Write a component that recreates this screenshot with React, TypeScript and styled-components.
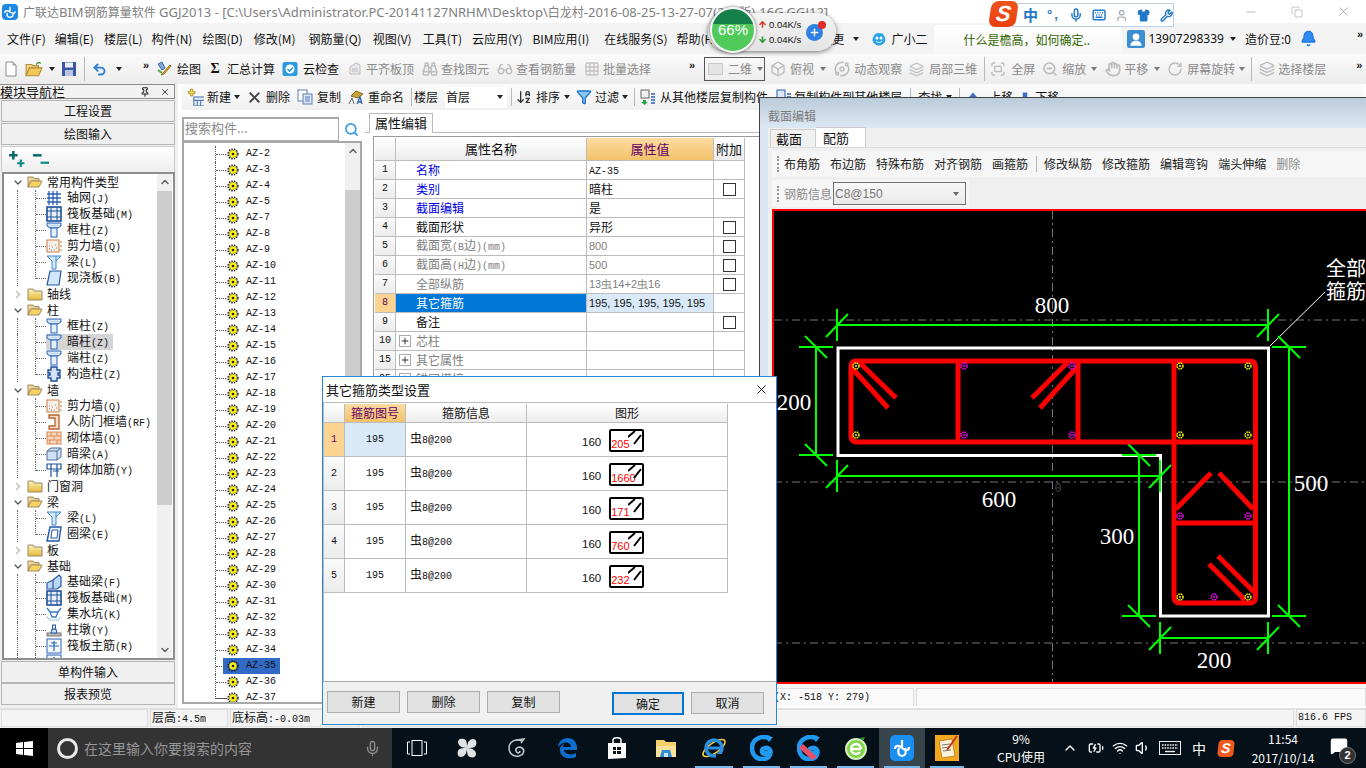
import React from 'react';
import styled, { createGlobalStyle } from 'styled-components';
import {
  Binoculars, Glasses, Grid3x3, Box, Orbit, Layers, Hand, RotateCw, Fullscreen, Search, ZoomOut,
  Undo2, Mic, Keyboard, Shirt, Wrench, User, ChevronUp, ChevronDown, ChevronRight, Wifi, Volume1,
  Pin, X, Minus, Copy, ArrowUp, ArrowDown, Plus, Bell, BatteryCharging, MessageSquare, Filter, ArrowDownAZ,
} from 'lucide-react';

const CJK = '"Noto Sans CJK SC", "Noto Sans", sans-serif';

const Global = createGlobalStyle`
  html, body { margin: 0; padding: 0; width: 1366px; height: 768px; overflow: hidden; background: #0b1115; }
  * { box-sizing: border-box; }
  #root { width: 1366px; height: 768px; }
`;

const Screen = styled.div`
  position: relative; width: 1366px; height: 768px; overflow: hidden; display: flex; flex-direction: column;
  background: #f0f0f0; color: #111; font: 12px/16px ${CJK};
`;

const TitleBar = styled.div`
  height: 23px; background: #fff; display: flex; align-items: center; padding-left: 2px; flex: none; color: #808080; font-size: 13px; white-space: nowrap;
`;
const AppBadge = styled.div`
  width: 16px; height: 16px; border-radius: 4px; background: #1e88e5; color: #fff; display: flex; align-items: center; justify-content: center; margin-right: 5px; flex: none;
`;
const TitleText = styled.span`font: 13px/16px "Noto Sans", "Noto Sans CJK SC", sans-serif;`;
const TitleCjk = styled.span`font: 12px/16px "Noto Sans CJK SC", sans-serif;`;
const WinControls = styled.div`
  margin-left: auto; display: flex; color: #8a8a8a;
`;
const WinBtn = styled.div`width: 46px; height: 23px; display: flex; align-items: center; justify-content: center;`;

const MenuBar = styled.div`
  height: 31px; flex: none; background: #f3f3f3; display: flex; align-items: center; white-space: nowrap;
`;
const MenuItem = styled.span<{ $ml?: number; $c?: string }>`
  margin-left: ${p => p.$ml ?? 10}px; color: ${p => p.$c ?? '#111'}; display: inline-flex; align-items: center;
`;
const PhoneNo = styled(MenuItem)`font-family: "Noto Sans", sans-serif;`;
const TipTab = styled.div`
  width: 188px; height: 29px; margin-left: 7px; margin-top: 2px; background: linear-gradient(#fff, #f6f6f6); color: #336600; display: flex; align-items: center; justify-content: flex-start; padding-left: 29px; flex: none; border-radius: 3px 3px 0 0;
`;
const Caret = styled.i<{ $ml?: number; $c?: string }>`
  display: inline-block; width: 0; height: 0; border: 3px solid transparent; border-top: 4px solid ${p => p.$c ?? '#222'}; border-bottom: 0; margin-left: ${p => p.$ml ?? 5}px; flex: none;
`;
const More = styled.span<{ $ml?: number }>`
  font: bold 11px/10px "Liberation Sans", sans-serif; align-self: flex-start; margin-top: 6px; margin-left: ${p => p.$ml ?? 0}px; letter-spacing: -1px; width: 10px; flex: none;
`;

const ToolRow = styled.div`
  height: 30px; flex: none; display: flex; align-items: center; white-space: nowrap; background: linear-gradient(#fbfbfb, #ececec);
`;
const Tool = styled.span<{ $ml?: number; $gap?: number; $dim?: boolean }>`
  display: inline-flex; align-items: center; flex: none; margin-left: ${p => p.$ml ?? 8}px; gap: ${p => p.$gap ?? 4}px; color: ${p => (p.$dim ? '#8a8a8a' : '#111')};
`;
const Sep = styled.i<{ $ml?: number; $h?: number }>`
  display: inline-block; width: 1px; height: ${p => p.$h ?? 24}px; background: #b8b8b8; margin-left: ${p => p.$ml ?? 7}px; flex: none;
`;
const Sigma = styled.b`font: bold 14px/16px "Liberation Serif", serif; width: 10px; text-align: center;`;
const ViewCombo = styled.div`
  width: 61px; height: 24px; margin-left: 5px; border: 1px solid #555; display: flex; align-items: center; padding-left: 3px; color: #8a8a8a; flex: none; gap: 5px;
`;
const ViewSwatch = styled.i`width: 15px; height: 12px; background: #e4e4e4; border: 1px solid #c8c8c8; display: block;`;

const Workspace = styled.div`flex: 1; min-height: 0; display: flex; background: #fff;`;

const Nav = styled.div`width: 178px; flex: none; display: flex; flex-direction: column; background: #f0f0f0; padding-right: 2px;`;
const NavHead = styled.div`
  height: 15px; flex: none; border: 1px solid #8c8c8c; border-left: 0; background: #f2f2f2; display: flex; align-items: center; font-size: 13px; line-height: 13px; margin-right: 1px; color: #111;
`;
const NavHeadIcons = styled.span`margin-left: auto; display: flex; gap: 10px; padding-right: 4px; color: #222;`;
const NavBtn = styled.div<{ $mt?: number }>`
  height: 22px; flex: none; margin: ${p => p.$mt ?? 1}px 1px 0 1px; background: #f0f0f0; border: 1px solid #b5b5b5; display: flex; align-items: center; justify-content: center; font-size: 12px; color: #111;
`;
const ExpandBar = styled.div`
  height: 26px; flex: none; margin: 1px 1px 0 1px; background: linear-gradient(#fff, #eee); border: 1px solid #ccc; border-bottom: 0; display: flex; align-items: center; padding: 0 0 3px 6px; gap: 7px;
`;
const NavTree = styled.div`
  height: 488px; flex: none; margin-left: 2px; margin-right: 1px; border: 2px solid #8f8f8f; background: #fff; display: flex; overflow: hidden; padding-right: 1px;
`;
const NavRows = styled.div`flex: 1; min-width: 0; overflow: hidden;`;
const NavRow = styled.div<{ $leaf?: boolean; $trunk?: boolean; $last?: boolean }>`
  position: relative; height: 16px; display: flex; align-items: center; white-space: nowrap; padding-left: ${p => (p.$leaf ? 42 : 8)}px;
  &::before { content: ''; position: absolute; left: 13px; top: 0; bottom: 0; border-left: ${p => (p.$trunk ? '1px dotted #666' : '0')}; }
  &::after { content: ''; position: absolute; left: 31px; top: 0; height: ${p => (p.$last ? '8px' : '16px')}; width: 10px; border-left: ${p => (p.$leaf ? '1px dotted #666' : '0')}; border-bottom: ${p => (p.$last ? '1px dotted #666' : '0')}; }
`;
const LeafTick = styled.i`position: absolute; left: 32px; top: 8px; width: 10px; border-top: 1px dotted #666;`;
const NavLabel = styled.span<{ $sel?: boolean }>`
  display: inline-flex; align-items: center; gap: 5px; height: 16px; padding-right: ${p => (p.$sel ? '4px' : '0')}; background: ${p => (p.$sel ? '#d5d5d5' : 'transparent')}; position: relative; z-index: 1;
`;
const FolderLabel = styled.span`display: inline-flex; align-items: center; gap: 4px; margin-left: 3px;`;
const Chevron = styled.span`width: 12px; display: inline-flex; justify-content: center; color: #777; flex: none; position: relative; z-index: 1; background: #fff;`;
const Lat = styled.span`font: 10px/16px "Liberation Mono", monospace;`;

const Scroll = styled.div`
  width: 15px; flex: none; background: #f0f0f0; display: flex; flex-direction: column; color: #606060; overflow: hidden;
`;
const ScrollArrow = styled.div`height: 16px; flex: none; display: flex; align-items: center; justify-content: center; background: #f0f0f0;`;
const ScrollThumb = styled.div<{ $top: number; $h: number }>`
  height: ${p => p.$h}px; margin-top: ${p => p.$top}px; flex: none; background: #cdcdcd;
`;
const ScrollFill = styled.div`flex: 1;`;

const CenterCol = styled.div`flex: 1; min-width: 0; display: flex; flex-direction: column; background: #fff;`;
const CenterBar = styled.div`
  height: 26px; flex: none; margin-left: 4px; margin-right: 2px; display: flex; align-items: center; white-space: nowrap; background: linear-gradient(#fcfcfc, #f0f0f0); border-radius: 3px 3px 0 0; overflow: hidden; color: #111;
`;
const FloorBox = styled.div`
  width: 62px; height: 21px; margin-left: 7px; background: #fff; display: flex; align-items: center; justify-content: space-between; padding: 0 4px 0 1px; flex: none;
`;
const CenterBody = styled.div`flex: 1; min-height: 0; display: flex;`;

const ListPane = styled.div`width: 184px; flex: none; padding: 7px 0 4px 4px; display: flex; flex-direction: column;`;
const SearchRow = styled.div`height: 24px; flex: none; display: flex; align-items: center;`;
const SearchBox = styled.div`
  width: 157px; height: 25px; border: 2px solid #a8a8a8; border-right-width: 1px; background: #fff; color: #8a8a8a; display: flex; align-items: center; padding: 0 0 2px 1px; font-size: 13px;
`;
const SearchGlyph = styled.span`margin-left: 5px; color: #3b9ae8; display: flex;`;
const ListBox = styled.div`flex: 1; min-height: 0; border: 2px solid #a8a8a8; display: flex; overflow: hidden;`;
const ListRows = styled.div`flex: 1; padding-top: 3px; overflow: hidden;`;
const ListRow = styled.div<{ $last?: boolean }>`
  position: relative; height: 16px; display: flex; align-items: center; padding-left: 43px;
  &::before { content: ''; position: absolute; left: 31px; top: 0; width: 11px; height: ${p => (p.$last ? '8px' : '16px')}; border-left: 1px dotted #555; border-bottom: ${p => (p.$last ? '1px dotted #555' : '0')}; }
`;
const RowTick = styled.i`position: absolute; left: 32px; top: 8px; width: 10px; border-top: 1px dotted #555;`;
const ListItem = styled.span<{ $sel?: boolean }>`
  display: inline-flex; align-items: center; gap: 7px; height: 16px; width: 57px; margin-left: -4px; padding-left: 4px; background: ${p => (p.$sel ? '#3169c6' : 'transparent')}; color: #111;
`;

const PropsPane = styled.div`flex: 1; min-width: 0; padding: 3px 0 0 3px; display: flex; flex-direction: column;`;
const TabStrip = styled.div`height: 20px; flex: none; border-bottom: 1px solid #bbb; display: flex; padding-left: 4px; font-size: 13px;`;
const PTab = styled.div`width: 64px; height: 20px; background: #fff; border: 1px solid #bbb; border-bottom: 0; display: flex; align-items: center; justify-content: center; padding-bottom: 2px;`;
const PropFrame = styled.div`margin: 3px 0 0 8px; border-top: 1px solid #999; border-left: 1px solid #999; padding-top: 1px; padding-left: 1px; flex: 1; min-height: 0; overflow: hidden;`;
const PropGrid = styled.div`display: grid; grid-template-columns: 21px 191px 127px 31px; grid-template-rows: 23px; grid-auto-rows: 19px;`;
const Cell = styled.div<{ $kind?: string; $c?: string; $center?: boolean; $pl?: number }>`
  border-right: 1px solid #bcbcbc; border-bottom: 1px solid #bcbcbc; display: flex; align-items: center; white-space: nowrap; overflow: hidden;
  padding-left: ${p => p.$pl ?? 0}px; justify-content: ${p => (p.$center ? 'center' : 'flex-start')};
  color: ${p => p.$c ?? '#111'};
  background: ${p => ({ head: 'linear-gradient(#fff,#ececec)', row: 'linear-gradient(#fafafa,#ececec)', gold: 'linear-gradient(#fcdba0,#f2c26a)', rowsel: '#fcd391', blue: '#0078d7', pale: '#d9e9f7' } as Record<string, string>)[p.$kind ?? ''] ?? '#fff'};
`;
const HeadCell = styled(Cell)`font-size: 13px;`;
const Check1 = styled.i`display: block; width: 13px; height: 13px; border: 1px solid #333; background: #fff;`;
const PlusBox = styled.span`width: 12px; height: 12px; border: 1px solid #aaa; display: inline-flex; align-items: center; justify-content: center; margin: 0 5px 0 3px; color: #111;`;
const Val = styled.span`font: 11px/16px "Liberation Sans", sans-serif;`;

const StatusBar = styled.div`height: 20px; flex: none; display: flex; background: #f0f0f0; padding-bottom: 1px; padding-left: 1px; gap: 2px; border-top: 1px solid #e0e0e0;`;
const StatusCell = styled.div<{ $w?: number; $grow?: boolean }>`
  width: ${p => (p.$w ? `${p.$w}px` : 'auto')}; flex: ${p => (p.$grow ? 1 : 'none')}; background: #f4f4f4; border: 1px solid #ddd; display: flex; align-items: center; padding-left: 1px; white-space: nowrap; font-size: 12px;
`;

const Taskbar = styled.div`height: 40px; flex: none; background: #061018; display: flex; align-items: center; color: #fff;`;
const Start = styled.div`width: 48px; height: 40px; background: #000; display: flex; align-items: center; justify-content: center; flex: none;`;
const TaskSearch = styled.div`
  width: 344px; height: 40px; background: #333; display: flex; align-items: center; color: #969696; font-size: 14px; padding-left: 9px; flex: none;
`;
const Cortana = styled.i`width: 21px; height: 21px; border: 3px solid #e8e8e8; border-radius: 50%; margin-right: 6px; flex: none;`;
const TaskMic = styled.span`margin-left: auto; margin-right: 11px; color: #8a8a8a; display: flex;`;
const TaskApp = styled.div<{ $w: number; $on?: boolean; $open?: boolean }>`
  position: relative; width: ${p => p.$w}px; height: 40px; flex: none; display: flex; align-items: center; justify-content: center; background: ${p => (p.$on ? '#38444b' : 'transparent')};
  &::after { content: ''; display: ${p => (p.$open ? 'block' : 'none')}; position: absolute; left: 5px; right: 5px; bottom: 0; height: 2px; background: #76b9ed; }
`;
const CpuBlock = styled.div`width: 72px; margin-left: 16px; text-align: center; font-size: 12px; line-height: 18px; flex: none;`;
const Tray = styled.div<{ $w: number }>`width: ${p => p.$w}px; height: 40px; display: flex; align-items: center; justify-content: center; flex: none; font-size: 14px;`;
const Clock = styled.div`width: 74px; text-align: center; font-size: 12px; line-height: 19px; flex: none; margin-left: 6px;`;
const Notice = styled.div`position: relative; width: 20px; height: 22px; display: flex; margin-left: 10px; color: #fff;`;
const NoticeBadge = styled.span`position: absolute; right: -6px; bottom: -5px; width: 17px; height: 17px; border-radius: 50%; background: #333; border: 1px solid #777; font: bold 11px/15px "Liberation Sans", sans-serif; text-align: center;`;

const NetPill = styled.div`
  position: absolute; left: 708px; top: 13px; width: 128px; height: 38px; border-radius: 19px; background: linear-gradient(#f4f4f4, #e4e4e4); box-shadow: 0 1px 5px rgba(0,0,0,.55); display: flex; align-items: center; padding-left: 50px; z-index: 8;
`;
const NetGauge = styled.div`
  position: absolute; left: 710px; top: 7px; width: 46px; height: 46px; border-radius: 50%; background: linear-gradient(#17804a 0 36%, #4fca5b 37% 100%); border: 2px solid #f5f5f5; box-shadow: 0 0 3px rgba(0,0,0,.7); color: #fff; font: 15px/42px "Liberation Sans", sans-serif; text-align: center; z-index: 9;
`;
const NetRates = styled.div`font: 9.5px/15px "Liberation Sans", sans-serif; color: #111; display: grid; grid-template-columns: 11px auto; align-items: center;`;
const NetPlus = styled.div`position: relative; width: 17px; height: 17px; border-radius: 50%; background: #2f80e0; color: #fff; display: flex; align-items: center; justify-content: center; margin-left: 5px;`;
const NetDot = styled.i`position: absolute; right: -3px; top: -3px; width: 8px; height: 8px; border-radius: 50%; background: #e02a2a;`;

const ImeBar = styled.div`
  position: absolute; left: 1012px; top: 3px; width: 162px; height: 24px; background: #fff; border: 1px solid #bcd0e2; display: flex; align-items: center; padding-left: 10px; gap: 9px; color: #1f78c8; z-index: 7;
`;
const ImeLogo = styled.div`
  position: absolute; left: 990px; top: 1px; width: 27px; height: 26px; border-radius: 7px; background: linear-gradient(#f0541e, #e8400e); color: #fff; font: bold italic 22px/26px "Liberation Sans", sans-serif; text-align: center; transform: skewX(-8deg); z-index: 8;
`;
const ImeZh = styled.b`font-size: 15px; color: #1f78c8;`;
const ImePunct = styled.b`font: bold 13px/14px "Liberation Sans", sans-serif; color: #1f78c8; letter-spacing: 2px;`;

const Editor = styled.div`
  position: absolute; left: 759px; top: 97px; width: 607px; height: 609px; background: #d9e6f1; border-top: 1px solid #444; border-left: 1px solid #444; display: flex; flex-direction: column; padding-left: 8px; z-index: 3;
`;
const EditorTitle = styled.div`height: 30px; flex: none; margin: 0 0 0 -8px; padding-left: 8px; background: linear-gradient(#bccbda, #dce8f3); display: flex; align-items: center; color: #7b7b7b; font-size: 12px; padding-top: 6px;`;
const EditorBody = styled.div`flex: 1; min-height: 0; display: flex; flex-direction: column; background: #efefef;`;
const EditorTabs = styled.div`height: 20px; flex: none; display: flex; align-items: flex-end; padding-left: 2px; border-bottom: 1px solid #ddd;`;
const ETab = styled.div<{ $on?: boolean }>`
  width: ${p => (p.$on ? 50 : 46)}px; height: ${p => (p.$on ? 20 : 18)}px; background: ${p => (p.$on ? '#fff' : '#f0f0f0')}; border: 1px solid #ccc; border-bottom: 0; border-left: ${p => (p.$on ? '0' : '1px solid #ccc')}; display: flex; align-items: center; padding-left: ${p => (p.$on ? 7 : 5)}px; color: #111; font-size: 13px;
`;
const EBar = styled.div<{ $w?: number; $h: number }>`
  height: ${p => p.$h}px; width: ${p => (p.$w ? `${p.$w}px` : 'auto')}; flex: none; display: flex; align-items: center; margin: 3px 0 0 4px; padding-left: 5px; background: #f6f6f6; white-space: nowrap;
`;
const Grip = styled.i`width: 2px; height: 16px; margin-right: 5px; border-left: 2px dotted #9a9a9a; flex: none;`;
const ELabel = styled.span<{ $dim?: boolean; $ml?: number }>`color: ${p => (p.$dim ? '#8a8a8a' : '#222')}; margin-left: ${p => p.$ml ?? 10}px; flex: none;`;
const ECombo = styled.div`
  width: 133px; height: 23px; margin-left: 1px; border: 1px solid #707070; background: linear-gradient(#f8f8f8, #e9e9e9); display: flex; align-items: center; justify-content: space-between; padding: 0 6px 0 1px; color: #777; flex: none; font: 12px/16px "Liberation Sans", sans-serif;
`;
const CanvasWrap = styled.div`flex: 1; min-height: 0; margin: 2px 0 0 4px; background: #000; border: 2px solid #f00; border-right: 0; overflow: hidden;`;
const CanvasSvg = styled.svg`display: block;`;
const EStatus = styled.div`height: 22px; flex: none; display: flex; gap: 2px; padding: 4px 0 0 4px; background: #f4f4f4;`;
const ECell = styled.div<{ $w?: number }>`
  width: ${p => (p.$w ? `${p.$w}px` : 'auto')}; flex: ${p => (p.$w ? 'none' : 1)}; border: 1px solid #ddd; border-bottom: 0; background: #fafafa; display: flex; align-items: center; padding-left: 1px; white-space: nowrap;
`;

const Dialog = styled.div`
  position: absolute; left: 322px; top: 376px; width: 455px; height: 349px; background: #f0f0f0; border: 1px solid #2a87d6; display: flex; flex-direction: column; z-index: 5;
`;
const DTitle = styled.div`height: 25px; flex: none; background: #fff; display: flex; align-items: center; justify-content: space-between; padding: 0 7px 0 3px; font-size: 13px; color: #111;`;
const DBody = styled.div`flex: 1; min-height: 0; background: #fff; border-top: 1px solid #bbb; border-bottom: 1px solid #aaa; border-left: 1px solid #bbb; padding: 1px 0 0 0;`;
const DGrid = styled.div`display: grid; grid-template-columns: 21px 61px 121px 201px; grid-template-rows: 19px repeat(5, 34px);`;
const DFoot = styled.div`height: 42px; flex: none; display: flex; align-items: flex-start; padding: 9px 13px 0 4px;`;
const DBtn = styled.div<{ $primary?: boolean; $ml?: number; $mt?: number }>`
  width: ${p => (p.$primary ? 72 : 73)}px; height: ${p => (p.$primary ? 23 : 22)}px; margin-left: ${p => p.$ml ?? 0}px; margin-top: ${p => p.$mt ?? 0}px; flex: none; background: #e1e1e1; border: ${p => (p.$primary ? '2px solid #0078d7' : '1px solid #adadad')}; display: flex; align-items: center; justify-content: center; color: #111;
`;
const ShapeNum = styled.span`font: 11.500px/16px "Liberation Sans", sans-serif; margin-left: 55px; margin-right: 8px; position: relative; top: 2px;`;
const ShapeBox = styled.div`
  position: relative; width: 35px; height: 23px; border: 2px solid #000; border-radius: 2px; flex: none; background: #fff; overflow: hidden; top: 1px;
`;
const ShapeHook = styled.svg`position: absolute; right: 0; top: 0;`;
const ShapeVal = styled.span`position: absolute; left: 0; bottom: -1px; color: #f00; font: 11px/13px "Liberation Sans", sans-serif;`;

/* ---------- drawings ---------- */
type SP = { s?: number; children?: React.ReactNode };
const G = ({ s = 16, children }: SP) => <svg width={s} height={s} viewBox="0 0 16 16" style={{ flex: 'none', display: 'block' }}>{children}</svg>;

const ic = {
  grid: <G><path d="M3 1v14M7 1v14M11 1v14M1 4h14M1 8h14M1 12h14" stroke="#2a62b5" strokeWidth="1.3" fill="none" /></G>,
  raft: <G><rect x="1" y="1" width="14" height="14" fill="#e6effa" stroke="#1f4f9a" strokeWidth="1.6" /><path d="M5 1v14M11 1v14M1 5h14M1 11h14" stroke="#1f4f9a" /></G>,
  col: <G><path d="M1 1h14v3l-3 2H4L1 4z" fill="#cfe2fa" stroke="#2a62b5" /><rect x="5" y="6" width="6" height="9" fill="#e4effc" stroke="#2a62b5" /></G>,
  wall: <G><rect x="1" y="2" width="12" height="12" fill="#f6efe7" stroke="#cf7d42" /><path d="M3 11h1M6 9h1M8 12h1M10 10h1M5 12h1M3 8h1M9 7h1" stroke="#888" /><path d="M14 4h2M14 8h2M14 12h2" stroke="#cf7d42" /></G>,
  beam: <G><path d="M1 2h14l-5 5v8H6V7z" fill="#d7e9fb" stroke="#3f86d0" /><path d="M10 2v5l5-5" fill="none" stroke="#3f86d0" /></G>,
  slab: <G><path d="M4 1h11l-2 14H1z" fill="#d4e6fb" stroke="#2558a8" strokeWidth="1.2" /></G>,
  ring: <G><path d="M4 1h11l-2 14H1z" fill="#eef5fd" stroke="#2558a8" strokeWidth="1.4" /><path d="M6 4h6l-1 8H5z" fill="#fff" stroke="#2558a8" /></G>,
  con: <G><path d="M5 1h6v3h3v3h-2v2h2v3h-3v3H5v-3H2V9h2V7H2V4h3z" fill="#d4e3f7" stroke="#1f4f9a" strokeWidth="1.4" /></G>,
  door: <G><path d="M3 1h10v14H3v-3h6V4H3z" fill="#f6e0cb" stroke="#b4622c" strokeWidth="1.3" /></G>,
  brick: <G><rect x="1" y="2" width="14" height="12" fill="#f8d7bd" stroke="#d98a55" /><path d="M1 6h14M1 10h14M5 2v4M11 2v4M8 6v4M4 10v4M11 10v4" stroke="#d98a55" /></G>,
  dbeam: <G><path d="M1 5l4-3h10v9l-4 3H1z" fill="#cfe1f5" stroke="#4a6c96" /><path d="M1 5h10v9M11 5l4-3" fill="none" stroke="#4a6c96" /></G>,
  mesh: <G><path d="M1 2h14v5H1zM5 2v13M11 2v13" fill="none" stroke="#1f4f9a" strokeWidth="1.2" /><path d="M7 9h6" stroke="#1f4f9a" /></G>,
  fbeam: <G><path d="M1 15V9l6-3v9zM7 6l6-5 2 2v9l-4 3H7" fill="#bcd8f5" stroke="#2558a8" strokeWidth="1.2" /></G>,
  pit: <G><path d="M1 2l3 4h8l3-4M4 6l2 5h4l2-5" fill="none" stroke="#3a79c0" strokeWidth="1.3" /><path d="M1 11l3 3h8l3-3" fill="none" stroke="#7fb0e0" strokeWidth="1.6" strokeDasharray="1 1" /></G>,
  pier: <G><rect x="1" y="11" width="14" height="3" fill="#bcbcbc" stroke="#777" /><path d="M5 11l1-4h4l1 4z" fill="#cfe1f5" stroke="#2558a8" /><rect x="6.5" y="3" width="3" height="4" fill="#e6effa" stroke="#2558a8" /></G>,
  bar: <G><rect x="1" y="1" width="14" height="14" fill="#f2f7fd" stroke="#2a62b5" /><path d="M8 3v10M3 8h10M5 5h6" stroke="#2a62b5" strokeWidth="1.2" fill="none" /></G>,
};
type IcKey = keyof typeof ic;

const FolderOpen = () => <G><path d="M1 13V3h5l1 1.5h5V7H4z" fill="#f1d596" stroke="#9b8a63" /><path d="M1 13l3-6h11l-3 6z" fill="#f8d263" stroke="#9b8a63" /></G>;
const FolderShut = () => <G><path d="M1 14V3h5l1 2h8v9z" fill="url(#fg)" stroke="#8f8a72" /></G>;

const Gear = () => (
  <G s={12}>
    <circle cx="8" cy="8" r="6.6" fill="none" stroke="#111" strokeWidth="1.8" strokeDasharray="2 1.500" />
    <circle cx="8" cy="8" r="5.2" fill="#fbf31a" stroke="#333" strokeWidth=".5" />
    <circle cx="8" cy="8" r="1.8" fill="#222" />
  </G>
);

const Sim = ({ t }: { t: string }) => (
  <span>
    {t.split(/([\x20-\x7e]+)/).filter(Boolean).map((s, i) => (/^[\x20-\x7e]/.test(s) ? <Lat key={i}>{s}</Lat> : <React.Fragment key={i}>{s}</React.Fragment>))}
  </span>
);

const dimI = {
  flat: <G><path d="M3 6l6-4 4 2v9H3z" fill="#e8e8e8" stroke="#bdbdbd" /><path d="M5 8h6M5 10h6" stroke="#bdbdbd" /></G>,
  bino: <Binoculars size={16} color="#bbb" strokeWidth={2.2} />,
  glass: <Glasses size={16} color="#bbb" />,
  batch: <Grid3x3 size={16} color="#c4c4c4" />,
  top: <Box size={16} color="#bbb" />,
  orbit: <Orbit size={16} color="#bbb" strokeWidth={2.2} />,
  part: <Layers size={15} color="#c4c4c4" strokeWidth={2.2} />,
  full: <Fullscreen size={16} color="#bbb" />,
  zoom: <ZoomOut size={16} color="#bbb" strokeWidth={2.4} />,
  pan: <Hand size={16} color="#bbb" strokeWidth={2.4} />,
  rot: <RotateCw size={16} color="#bbb" />,
  lay: <Layers size={16} color="#bbb" />,
};

const NewDoc = () => <G><path d="M3 1h7l3 3v11H3z" fill="#fff" stroke="#8c8c8c" /><path d="M10 1v3h3" fill="#ddd" stroke="#8c8c8c" /></G>;
const OpenDoc = () => <G s={18}><path d="M1 14V4h5l1 1h5v2H4z" fill="#f0d48a" stroke="#b68f3c" /><path d="M1 14l3-7h11l-3 7z" fill="#f5c85a" stroke="#b68f3c" /><path d="M10 4c1-2 3-2 4-1" stroke="#3a7d3a" fill="none" /></G>;
const Save = () => <G><rect x="1" y="1" width="14" height="14" fill="#3a57a5" /><rect x="4" y="1.5" width="8" height="5" fill="#e9eef8" /><rect x="4" y="9" width="8" height="6" fill="#b8c6e2" /></G>;
const DrawI = () => <G><path d="M2 3l4-2 3 6-3 2z" fill="#7aa7dc" stroke="#3b6ca6" /><path d="M7 12l7-8 1 1-7 8-3 1z" fill="#e3b23a" stroke="#9a6f17" /><path d="M2 9l4 3" stroke="#57a84a" strokeWidth="2" /></G>;
const CloudI = () => <G><rect x=".5" y="1" width="15" height="14" rx="2" fill="#2c9ae0" /><circle cx="8" cy="8" r="4.5" fill="#fff" /><path d="M5.5 8l2 2 3.5-3.5" stroke="#2c9ae0" strokeWidth="1.6" fill="none" /></G>;

const SmileI = () => <G><path d="M3 5c0-4 10-4 10 0 2 2 2 6-1 8-3 2-6 2-8 0-3-2-3-6-1-8z" fill="#2aa3e8" /><circle cx="6" cy="7" r="1.5" fill="#fff" /><circle cx="10" cy="7" r="1.5" fill="#fff" /><path d="M5 10c2 2 4 2 6 0" stroke="#fff" fill="none" /></G>;

const NewI = () => <G s={18}><path d="M4 1h2v2h2v2H6v2H4V5H2V3h2z" fill="#f5d45c" stroke="#a68a20" strokeWidth=".7" /><rect x="7" y="8" width="10" height="8" fill="#e9f0fb" stroke="#5278b8" /><path d="M7 11h10M10 11v5M13 11v5" stroke="#5278b8" /></G>;
const CopyI = () => <G><rect x="1" y="1" width="9" height="11" fill="#fff" stroke="#5c7fb5" /><rect x="6" y="5" width="9" height="10" fill="#dce8f8" stroke="#5c7fb5" /><path d="M8 8h5M8 10h5M8 12h5" stroke="#5c7fb5" /></G>;
const RenameI = () => <G><path d="M3 7l5-5 7 3-5 4z" fill="#c9a33c" stroke="#8a6d1a" /><path d="M1 15l3-6 2 6" stroke="#666" fill="none" /><path d="M9 15l3-7 2 7M10 13h3" stroke="#2a62b5" strokeWidth="1.3" fill="none" /></G>;
const FromI = () => <G><rect x="1" y="1" width="8" height="8" fill="#eee" stroke="#666" /><path d="M3 11h3v2h2l-3.5 3L1 13h2z" fill="#2aa34a" /><path d="M11 5h4M11 8h4M11 11h4M11 14h4" stroke="#2a62b5" strokeWidth="1.6" /></G>;
const ToI = () => <G><rect x="1" y="1" width="8" height="10" fill="#dce8f8" stroke="#2a62b5" /><path d="M11 5h4M11 8h4M11 11h4" stroke="#2a62b5" strokeWidth="1.6" /></G>;
const UpI = () => <G s={12}><path d="M8 2l6 7H2z" fill="#3e6fd0" /><rect x="5" y="9" width="6" height="5" fill="#8fb0ea" /></G>;
const DownI = () => <G s={12}><rect x="5" y="2" width="6" height="6" fill="#3e6fd0" /><path d="M2 8h12l-6 6z" fill="#8fb0ea" /></G>;

const WinLogo = () => <svg width="17" height="15" viewBox="0 0 17 15"><path d="M0 2l7-1v6H0zM8 .9L17 0v7H8zM0 8h7v6l-7-1zM8 8h9v7l-9-1z" fill="#fff" /></svg>;
const TaskView = () => <svg width="20" height="16" viewBox="0 0 20 16"><path d="M3 2H.5v12H3M17 2h2.500v12H17" stroke="#fff" fill="none" /><rect x="5" y=".5" width="10" height="15" stroke="#fff" fill="none" /></svg>;
const FanI = () => <svg width="22" height="22" viewBox="0 0 22 22"><path d="M11 11C5 11 2 8 2 5s3-4 6-3 3 5 3 9zm0 0c0-6 3-9 6-9s4 3 3 6-5 3-9 3zm0 0c6 0 9 3 9 6s-3 4-6 3-3-5-3-9zm0 0c0 6-3 9-6 9s-4-3-3-6 5-3 9-3z" fill="#dfe3e6" /></svg>;
const SwirlI = () => <svg width="20" height="22" viewBox="0 0 20 22"><path d="M15 4C8 1 2 5 2 11s5 9 10 8 6-6 3-8-7 0-6 3 4 2 4 0" stroke="#bfc4c7" strokeWidth="1.6" fill="none" /><path d="M9 3l8-1-3 4" stroke="#bfc4c7" strokeWidth="1.4" fill="none" /></svg>;
const EdgeI = () => <svg width="22" height="22" viewBox="0 0 22 22"><path d="M2 11C2 5 6 1 12 1c5 0 9 4 9 10v2H8c0 4 7 6 12 3v4c-7 3-16 1-16-7 0-4 3-6 6-7-2 1-3 2-3 4h8c0-5-7-6-11-2-1 1-2 2-2 3z" fill="#0a6fd0" /></svg>;
const StoreI = () => <svg width="22" height="24" viewBox="0 0 22 24"><path d="M2 7h18v15l-18 1z" fill="#fff" /><path d="M7 7V4c0-3 8-3 8 0v3" stroke="#fff" strokeWidth="1.5" fill="none" /><path d="M7 11h3v3H7zM11 11h4v3h-4zM7 15h3v3H7zM11 15h4v3h-4z" fill="#111" /></svg>;
const ExplorerI = () => <svg width="22" height="20" viewBox="0 0 22 20"><path d="M1 2h8l2 2h10v15H1z" fill="#f4cf6a" /><path d="M1 8h20v11H1z" fill="#fbe29a" /><path d="M7 12h8l2 7H5z" fill="#2e8fd8" /><rect x="9" y="15" width="4" height="4" fill="#c9e6fa" /></svg>;
const IeI = () => <svg width="26" height="26" viewBox="0 0 26 26"><ellipse cx="13" cy="13" rx="13" ry="5" transform="rotate(-35 13 13)" fill="none" stroke="#f0c93a" strokeWidth="1.6" /><circle cx="13" cy="13" r="8" fill="none" stroke="#2a8fe0" strokeWidth="3.5" /><path d="M6 13h15" stroke="#2a8fe0" strokeWidth="3" /><path d="M15 21h7" stroke="#061018" strokeWidth="4" /></svg>;
const GlodonI = ({ red }: { red?: boolean }) => (
  <svg width="24" height="26" viewBox="0 0 24 26">
    <path d="M19 3C10 0 2 5 2 13s6 12 12 11 8-7 5-10c-2-2-7-1-7 2s3 3 4 2" fill="none" stroke="#1f9af0" strokeWidth="4.6" strokeLinecap="round" />
    <path d="M15 2h8l-4 5z" fill="#1f9af0" />
    {red && <path d="M6 9l14 13-5 3L2 13z" fill="#e8506a" />}
  </svg>
);
const GreenE = () => <svg width="26" height="26" viewBox="0 0 26 26"><circle cx="13" cy="14" r="10" fill="#7ed348" stroke="#d8f0c0" strokeWidth="2" /><path d="M8 14h10M18 14a5 5 0 1 0-1 3" stroke="#fff" strokeWidth="2.4" fill="none" /><path d="M17 3l5-1-2 4" fill="#2f9e2f" /></svg>;
const BlueApp = () => <svg width="24" height="26" viewBox="0 0 24 26"><rect width="24" height="26" rx="5" fill="#1a8fef" /><path d="M12 5v8M5 14c0-4 4-4 7-1s7 3 7-1M9 13c-2 5 0 8 3 8s5-3 3-8" stroke="#fff" strokeWidth="2.2" fill="none" /></svg>;
const NoteApp = () => <svg width="24" height="26" viewBox="0 0 24 26"><rect width="24" height="26" fill="#f2a81e" /><path d="M4 6l13-2 3 17-13 2z" fill="#fbf3dc" stroke="#c9851a" /><path d="M7 10l8-1M7 13l8-1M8 16l8-1" stroke="#777" /><path d="M22 1L12 15" stroke="#c4381c" strokeWidth="2" /></svg>;
const SogouGlyph = styled.span`display: block; width: 16px; height: 17px; border-radius: 4px; background: #ec5a1e; color: #fff; font: bold italic 14px/17px "Liberation Sans", sans-serif; text-align: center; transform: skewX(-6deg);`;
const KeyI = () => <svg width="22" height="14" viewBox="0 0 22 14"><rect x=".5" y=".5" width="21" height="13" fill="none" stroke="#eee" /><path d="M3 4h16M3 7h16" stroke="#eee" strokeDasharray="1.6 1" strokeWidth="1.4" /><path d="M6 10.5h10" stroke="#eee" strokeWidth="1.4" /></svg>;

/* ---------- data ---------- */
type NavItem = { t: string; f?: 'o' | 'c'; i?: IcKey; trunk?: boolean; sel?: boolean; last?: boolean };
const navItems: NavItem[] = [
  { t: '常用构件类型', f: 'o' },
  { t: '轴网(J)', i: 'grid', trunk: true }, { t: '筏板基础(M)', i: 'raft', trunk: true }, { t: '框柱(Z)', i: 'col', trunk: true },
  { t: '剪力墙(Q)', i: 'wall', trunk: true }, { t: '梁(L)', i: 'beam', trunk: true }, { t: '现浇板(B)', i: 'slab', trunk: true, last: true },
  { t: '轴线', f: 'c' },
  { t: '柱', f: 'o' },
  { t: '框柱(Z)', i: 'col', trunk: true }, { t: '暗柱(Z)', i: 'col', trunk: true, sel: true }, { t: '端柱(Z)', i: 'col', trunk: true }, { t: '构造柱(Z)', i: 'con', trunk: true, last: true },
  { t: '墙', f: 'o' },
  { t: '剪力墙(Q)', i: 'wall', trunk: true }, { t: '人防门框墙(RF)', i: 'door', trunk: true }, { t: '砌体墙(Q)', i: 'brick', trunk: true }, { t: '暗梁(A)', i: 'dbeam', trunk: true }, { t: '砌体加筋(Y)', i: 'mesh', trunk: true, last: true },
  { t: '门窗洞', f: 'c' },
  { t: '梁', f: 'o' },
  { t: '梁(L)', i: 'beam', trunk: true }, { t: '圈梁(E)', i: 'ring', trunk: true, last: true },
  { t: '板', f: 'c' },
  { t: '基础', f: 'o' },
  { t: '基础梁(F)', i: 'fbeam', trunk: true }, { t: '筏板基础(M)', i: 'raft', trunk: true }, { t: '集水坑(K)', i: 'pit', trunk: true }, { t: '柱墩(Y)', i: 'pier', trunk: true }, { t: '筏板主筋(R)', i: 'bar', trunk: true },
];
const azList = [2, 3, 4, 5, 7, 8, 9, ...Array.from({ length: 28 }, (_, i) => i + 10)];

type PropRow = { n: string; name: string; c?: string; val?: React.ReactNode; vc?: string; box?: boolean; sel?: boolean; plus?: boolean };
const propRows: PropRow[] = [
  { n: '1', name: '名称', c: '#0000e6', val: <Sim t="AZ-35" /> },
  { n: '2', name: '类别', c: '#0000e6', val: '暗柱', box: true },
  { n: '3', name: '截面编辑', c: '#0000e6', val: '是' },
  { n: '4', name: '截面形状', val: '异形', box: true },
  { n: '5', name: '截面宽(B边)(mm)', c: '#808080', val: <Val>800</Val>, vc: '#808080', box: true },
  { n: '6', name: '截面高(H边)(mm)', c: '#808080', val: <Val>500</Val>, vc: '#808080', box: true },
  { n: '7', name: '全部纵筋', c: '#808080', val: <Val>13虫14+2虫16</Val>, vc: '#808080', box: true },
  { n: '8', name: '其它箍筋', sel: true, val: <Val>195, 195, 195, 195, 195</Val> },
  { n: '9', name: '备注', box: true },
  { n: '10', name: '芯柱', c: '#808080', plus: true },
  { n: '15', name: '其它属性', c: '#808080', plus: true },
  { n: '25', name: '锚固搭接', c: '#808080', plus: true },
];
const stirrups = ['205', '1660', '171', '760', '232'];

const menus = [
  ['文件(F)', 7], ['编辑(E)', 9], ['楼层(L)', 10], ['构件(N)', 9], ['绘图(D)', 10], ['修改(M)', 11], ['钢筋量(Q)', 13], ['视图(V)', 11], ['工具(T)', 11], ['云应用(Y)', 10], ['BIM应用(I)', 10], ['在线服务(S)', 15], ['帮助(H)', 9],
] as [string, number][];

const dimTools: { i: React.ReactNode; t: string; ml: number; caret?: number; gap?: number }[] = [
  { i: dimI.top, t: '俯视', ml: 5, caret: 2 },
  { i: dimI.orbit, t: '动态观察', ml: 8 },
  { i: dimI.part, t: '局部三维', ml: 7, gap: 5 },
];
const dimTools2: { i: React.ReactNode; t: string; ml: number; caret?: number; gap?: number }[] = [
  { i: dimI.zoom, t: '缩放', ml: 7, caret: 1 },
  { i: dimI.pan, t: '平移', ml: 8, gap: 3, caret: 3 },
  { i: dimI.rot, t: '屏幕旋转', ml: 7, caret: 0.01 },
];

const taskApps: { n: React.ReactNode; w: number; open?: boolean; on?: boolean }[] = [
  { n: <TaskView />, w: 50 }, { n: <FanI />, w: 50 }, { n: <SwirlI />, w: 50 }, { n: <EdgeI />, w: 50 }, { n: <StoreI />, w: 50 }, { n: <ExplorerI />, w: 48 },
  { n: <IeI />, w: 48, open: true }, { n: <GlodonI />, w: 47, open: true }, { n: <GlodonI red />, w: 47, open: true }, { n: <GreenE />, w: 47, open: true }, { n: <BlueApp />, w: 46, on: true, open: true }, { n: <NoteApp />, w: 44, open: true },
];

/* ---------- section drawing ---------- */
const Tick = ({ x, y, v }: { x: number; y: number; v: boolean }) => (
  <g stroke="#00ff00" strokeWidth="2">
    {v ? <path d={`M${x} ${y - 16}V${y + 16}M${x - 11} ${y + 12}L${x + 11} ${y - 11}`} /> : <path d={`M${x - 17} ${y}H${x + 17}M${x - 11} ${y - 11}L${x + 11} ${y + 11}`} />}
  </g>
);
const Rebar = ({ x, y, c }: { x: number; y: number; c: string }) => (
  <g><circle cx={x} cy={y} r="3" fill="#111" stroke={c} strokeWidth="1.4" strokeDasharray="1.6 .8" /><circle cx={x} cy={y} r=".9" fill={c} /></g>
);
const dimText = { fontFamily: '"Liberation Serif", serif', fontSize: 23, fill: '#fff', textAnchor: 'middle' as const };

const Section = () => (
  <CanvasSvg width="592" height="471" viewBox="774 211 592 471">
    <g stroke="#777" strokeWidth="1" strokeDasharray="8 4 2 4">
      <path d="M774 320H1366M774 482H1366M774 643H1366M1052.5 211V682" />
    </g>
    <text x="1058" y="492" fill="#444" fontSize="12" fontFamily='"Liberation Mono", monospace' textAnchor="middle">0</text>
    <path d="M838 348H1268.5V616H1160.5V455.5H838Z" fill="none" stroke="#fff" strokeWidth="3" />
    <path d="M1270 346L1325 292" stroke="#fff" strokeWidth="1" />
    <g stroke="#00ff00" strokeWidth="2" fill="none">
      <path d="M837 325H1268M816 347V455M837 476H1160M1139 455V616M1289 347V616M1160 638H1268" />
    </g>
    <Tick x={837} y={325} v /><Tick x={1268} y={325} v />
    <Tick x={816} y={347} v={false} /><Tick x={816} y={455} v={false} />
    <Tick x={1289} y={347} v={false} /><Tick x={1289} y={616} v={false} />
    <Tick x={837} y={476} v /><Tick x={1160} y={476} v />
    <Tick x={1139} y={455} v={false} /><Tick x={1139} y={616} v={false} />
    <Tick x={1160} y={638} v /><Tick x={1268} y={638} v />
    <g stroke="#f00" strokeWidth="5" fill="none" strokeLinejoin="round">
      <path d="M856 361H1250Q1255.500 361 1255.500 367V597Q1255.500 603 1250 603H1180Q1174 603 1174 597V442" />
      <path d="M856 361Q851 361 851 367V436Q851 442 857 442H1255" />
      <path d="M958 361V442M1078 361V442M1174 361V442M1176 523H1254" />
      <path d="M851 367L888 408M860 363L896 398M1077 367L1040 408M1067 363L1032 398" />
      <path d="M1176 509L1211 473M1253 509L1219 473" />
      <path d="M1209 564L1245 600M1218 556L1254 592" />
    </g>
    <Rebar x={856} y={366} c="#ff0" /><Rebar x={964} y={366} c="#f0f" /><Rebar x={1072} y={366} c="#f0f" /><Rebar x={1180} y={366} c="#ff0" /><Rebar x={1248} y={366} c="#ff0" />
    <Rebar x={856} y={435} c="#ff0" /><Rebar x={964} y={435} c="#f0f" /><Rebar x={1072} y={435} c="#f0f" /><Rebar x={1180} y={435} c="#ff0" /><Rebar x={1248} y={435} c="#ff0" />
    <Rebar x={1180} y={516} c="#f0f" /><Rebar x={1248} y={516} c="#f0f" />
    <Rebar x={1180} y={597} c="#ff0" /><Rebar x={1214} y={597} c="#f0f" /><Rebar x={1248} y={597} c="#ff0" />
    <text x="1052" y="313" {...dimText}>800</text>
    <text x="794" y="410" {...dimText}>200</text>
    <text x="999" y="507" {...dimText}>600</text>
    <text x="1117" y="544" {...dimText}>300</text>
    <text x="1311" y="491" {...dimText}>500</text>
    <text x="1214" y="668" {...dimText}>200</text>
    <text x="1326" y="276" fontSize="20" fill="#fff" fontFamily={CJK}>全部</text>
    <text x="1326" y="299" fontSize="20" fill="#fff" fontFamily={CJK}>箍筋</text>
  </CanvasSvg>
);

export default function App() {
  return (
    <Screen>
      <Global />
      <svg width="0" height="0" style={{ position: 'absolute' }}>
        <defs><linearGradient id="fg" x1="0" y1="0" x2="0" y2="1"><stop offset="0" stopColor="#fdf2b5" /><stop offset="1" stopColor="#e8b93a" /></linearGradient></defs>
      </svg>

      <TitleBar>
        <AppBadge><G s={14}><path d="M8 2v7M2 9c0-3 3-3 6-1s6 2 6-1M5 9c-1 3 0 5 3 5s4-2 3-5" stroke="#fff" strokeWidth="1.6" fill="none" /></G></AppBadge>
        <TitleText><TitleCjk>广联达</TitleCjk>BIM<TitleCjk>钢筋算量软件</TitleCjk> GGJ2013 - [C:\Users\Administrator.PC-20141127NRHM\Desktop\<TitleCjk>白龙村</TitleCjk>-2016-08-25-13-27-07(216<TitleCjk>版</TitleCjk>)-16G.GGJ12]</TitleText>
        <WinControls>
          <WinBtn><Minus size={14} strokeWidth={1} /></WinBtn>
          <WinBtn><Copy size={12} strokeWidth={1} /></WinBtn>
          <WinBtn><X size={15} strokeWidth={1} /></WinBtn>
        </WinControls>
      </TitleBar>

      <MenuBar>
        {menus.map(([t, ml]) => <MenuItem key={t} $ml={ml}>{t}</MenuItem>)}
        <MenuItem $ml={103}>变更<Caret $ml={9} /></MenuItem>
        <MenuItem $ml={12}><SmileI /></MenuItem>
        <MenuItem $ml={4}>广小二</MenuItem>
        <TipTab>什么是檐高，如何确定..</TipTab>
        <MenuItem $ml={5}><G s={18}><rect x="0" y="0" width="16" height="16" rx="2" fill="#3b8fd0" /><circle cx="8" cy="6" r="3" fill="#fff" /><path d="M3 14c0-6 10-6 10 0z" fill="#fff" /></G></MenuItem>
        <PhoneNo $ml={3}>13907298339<Caret $ml={6} /></PhoneNo>
        <MenuItem $ml={9}>造价豆:0</MenuItem>
        <MenuItem $ml={9}><Bell size={17} color="#1f78e0" fill="#2f8cf0" /></MenuItem>
        <More $ml={40}>&raquo;</More>
      </MenuBar>

      <ToolRow>
        <Tool $ml={3}><NewDoc /></Tool>
        <Tool $ml={6}><OpenDoc /></Tool>
        <Caret $ml={6} />
        <Tool $ml={6}><Save /></Tool>
        <Sep $ml={7} />
        <Tool $ml={7}><Undo2 size={15} color="#2f7fd6" strokeWidth={3} /></Tool>
        <Caret $ml={9} />
        <More $ml={21}>&raquo;</More>
        <Tool $ml={3} $gap={5}><DrawI /><span>绘图</span></Tool>
        <Tool $ml={9} $gap={7}><Sigma>Σ</Sigma><span>汇总计算</span></Tool>
        <Tool $ml={7} $gap={5}><CloudI /><span>云检查</span></Tool>
        <Tool $dim $gap={3}>{dimI.flat}<span>平齐板顶</span></Tool>
        <Tool $dim $gap={3}>{dimI.bino}<span>查找图元</span></Tool>
        <Tool $dim $gap={3}>{dimI.glass}<span>查看钢筋量</span></Tool>
        <Tool $dim $gap={3}>{dimI.batch}<span>批量选择</span></Tool>
        <More $ml={38}>&raquo;</More>
        <ViewCombo><ViewSwatch /><span>二维</span><Caret $ml={0} $c="#777" /></ViewCombo>
        {dimTools.map(d => (
          <Tool key={d.t} $dim $ml={d.ml} $gap={d.gap ?? 4}>{d.i}<span>{d.t}</span>{d.caret ? <Caret $ml={d.caret} $c="#777" /> : null}</Tool>
        ))}
        <Sep $ml={7} />
        <Tool $dim $ml={5} $gap={5}>{dimI.full}<span>全屏</span></Tool>
        {dimTools2.map(d => (
          <Tool key={d.t} $dim $ml={d.ml} $gap={d.gap ?? 4}>{d.i}<span>{d.t}</span>{d.caret ? <Caret $ml={d.caret} $c="#777" /> : null}</Tool>
        ))}
        <Sep $ml={6} />
        <Tool $dim $ml={7} $gap={3}>{dimI.lay}<span>选择楼层</span></Tool>
        <More $ml={30}>&raquo;</More>
      </ToolRow>

      <Workspace>
        <Nav>
          <NavHead>模块导航栏<NavHeadIcons><Pin size={10} strokeWidth={2.5} /><X size={10} /></NavHeadIcons></NavHead>
          <NavBtn>工程设置</NavBtn>
          <NavBtn $mt={1}>绘图输入</NavBtn>
          <ExpandBar>
            <G s={17}><path d="M5 1v8M1 5h8" stroke="#0b6a6a" strokeWidth="2.4" /><path d="M12 9v7M8.500 12.500h7" stroke="#0b8a8a" strokeWidth="2" /></G>
            <G s={17}><path d="M1 5h8" stroke="#0b6a6a" strokeWidth="2.4" /><path d="M8 12h8" stroke="#0b8a8a" strokeWidth="2" /></G>
          </ExpandBar>
          <NavTree>
            <NavRows>
              {navItems.map((it, idx) => it.f ? (
                <NavRow key={idx} $trunk={false}>
                  <Chevron>{it.f === 'o' ? <ChevronDown size={13} strokeWidth={2.5} color="#555" /> : <ChevronRight size={13} strokeWidth={2.5} color="#bbb" />}</Chevron>
                  <FolderLabel>{it.f === 'o' ? <FolderOpen /> : <FolderShut />}<span>{it.t}</span></FolderLabel>
                </NavRow>
              ) : (
                <NavRow key={idx} $leaf $trunk={it.trunk} $last={it.last}>
                  <LeafTick />
                  <NavLabel $sel={it.sel}>{ic[it.i as IcKey]}<Sim t={it.t} /></NavLabel>
                </NavRow>
              ))}
              <NavRow $leaf $trunk><LeafTick /><NavLabel>{ic.bar}</NavLabel></NavRow>
            </NavRows>
            <Scroll>
              <ScrollArrow><ChevronUp size={12} strokeWidth={3} /></ScrollArrow>
              <ScrollThumb $top={1} $h={314} />
              <ScrollFill />
              <ScrollArrow><ChevronDown size={12} strokeWidth={3} /></ScrollArrow>
            </Scroll>
          </NavTree>
          <NavBtn $mt={1}>单构件输入</NavBtn>
          <NavBtn $mt={0}>报表预览</NavBtn>
        </Nav>

        <CenterCol>
          <CenterBar>
            <Tool $ml={4} $gap={3}><NewI /><span>新建</span><Caret $ml={0} /></Tool>
            <Tool $ml={6}><X size={17} color="#444" strokeWidth={2.5} /></Tool>
            <Tool $ml={3}><span>删除</span></Tool>
            <Tool $ml={7}><CopyI /><span>复制</span></Tool>
            <Tool $ml={7}><RenameI /><span>重命名</span></Tool>
            <Sep $ml={7} $h={18} />
            <Tool $ml={2}><span>楼层</span></Tool>
            <FloorBox>首层<Caret $ml={0} /></FloorBox>
            <Sep $ml={4} $h={18} />
            <Tool $ml={4} $gap={4}><ArrowDownAZ size={16} color="#333" /><span>排序</span><Caret $ml={0} /></Tool>
            <Tool $ml={6} $gap={3}><Filter size={16} color="#1f78c8" fill="#8cc4f0" /><span>过滤</span><Caret $ml={0} /></Tool>
            <Sep $ml={6} $h={18} />
            <Tool $ml={5}><FromI /><span>从其他楼层复制构件</span></Tool>
            <Tool $ml={8} $gap={2}><ToI /><span>复制构件到其他楼层</span></Tool>
            <Sep $ml={8} $h={18} />
            <Tool $ml={7} $gap={2}><span>查找</span><Caret $ml={2} /></Tool>
            <Sep $ml={7} $h={18} />
            <Tool $ml={7} $gap={10}><UpI /><span>上移</span></Tool>
            <Tool $ml={6} $gap={4}><DownI /><span>下移</span></Tool>
          </CenterBar>
          <CenterBody>
            <ListPane>
              <SearchRow>
                <SearchBox>搜索构件...</SearchBox>
                <SearchGlyph><Search size={15} strokeWidth={2.6} /></SearchGlyph>
              </SearchRow>
              <ListBox>
                <ListRows>
                  {azList.map((n, i) => (
                    <ListRow key={n} $last={i === azList.length - 1}>
                      <RowTick />
                      <ListItem $sel={n === 35}><Gear /><Lat>AZ-{n}</Lat></ListItem>
                    </ListRow>
                  ))}
                </ListRows>
                <Scroll>
                  <ScrollArrow><ChevronUp size={12} strokeWidth={3} /></ScrollArrow>
                  <ScrollThumb $top={31} $h={300} />
                </Scroll>
              </ListBox>
            </ListPane>
            <PropsPane>
              <TabStrip><PTab>属性编辑</PTab></TabStrip>
              <PropFrame>
                <PropGrid>
                  <HeadCell $kind="head" />
                  <HeadCell $kind="head" $center>属性名称</HeadCell>
                  <HeadCell $kind="gold" $center $c="#660066">属性值</HeadCell>
                  <HeadCell $kind="head" $center>附加</HeadCell>
                  {propRows.map(r => (
                    <React.Fragment key={r.n}>
                      <Cell $kind={r.sel ? 'rowsel' : 'row'} $center $c={r.sel ? '#660066' : '#111'}><Lat>{r.n}</Lat></Cell>
                      <Cell $kind={r.sel ? 'blue' : undefined} $pl={r.plus ? 0 : 20} $c={r.sel ? '#fff' : r.c}>
                        {r.plus && <PlusBox><Plus size={10} strokeWidth={2} /></PlusBox>}
                        <Sim t={r.name} />
                      </Cell>
                      <Cell $kind={r.sel ? 'pale' : undefined} $pl={2} $c={r.vc}>{r.val}</Cell>
                      <Cell $center>{r.box && <Check1 />}</Cell>
                    </React.Fragment>
                  ))}
                </PropGrid>
              </PropFrame>
            </PropsPane>
          </CenterBody>
        </CenterCol>
      </Workspace>

      <StatusBar>
        <StatusCell $w={147} />
        <StatusCell $w={78}><Sim t="层高:4.5m" /></StatusCell>
        <StatusCell $w={130}><Sim t="底标高:-0.03m" /></StatusCell>
        <StatusCell $grow />
        <StatusCell $w={70}><Lat>816.6 FPS</Lat></StatusCell>
      </StatusBar>

      <Taskbar>
        <Start><WinLogo /></Start>
        <TaskSearch>
          <Cortana />在这里输入你要搜索的内容
          <TaskMic><Mic size={17} /></TaskMic>
        </TaskSearch>
        {taskApps.map((a, i) => <TaskApp key={i} $w={a.w} $on={a.on} $open={a.open}>{a.n}</TaskApp>)}
        <CpuBlock>9%<br />CPU使用</CpuBlock>
        <Tray $w={26}><ChevronUp size={16} /></Tray>
        <Tray $w={25}><BatteryCharging size={16} /></Tray>
        <Tray $w={24}><Wifi size={16} /></Tray>
        <Tray $w={22}><Volume1 size={16} /></Tray>
        <Tray $w={32}><KeyI /></Tray>
        <Tray $w={26}>中</Tray>
        <Tray $w={28}><SogouGlyph>S</SogouGlyph></Tray>
        <Clock>11:54<br />2017/10/14</Clock>
        <Notice><MessageSquare size={18} fill="#fff" /><NoticeBadge>2</NoticeBadge></Notice>
      </Taskbar>

      <NetPill>
        <NetRates>
          <ArrowUp size={9} color="#d83a2a" strokeWidth={4} /><span>0.04K/s</span>
          <ArrowDown size={9} color="#2a9a3a" strokeWidth={4} /><span>0.04K/s</span>
        </NetRates>
        <NetPlus><Plus size={11} strokeWidth={3} /><NetDot /></NetPlus>
      </NetPill>
      <NetGauge>66%</NetGauge>

      <ImeLogo>S</ImeLogo>
      <ImeBar>
        <ImeZh>中</ImeZh>
        <ImePunct>°,</ImePunct>
        <Mic size={16} strokeWidth={2.5} />
        <Keyboard size={16} strokeWidth={2.5} />
        <User size={15} color="#aab4bc" strokeWidth={2.5} />
        <Shirt size={15} fill="#1f78c8" strokeWidth={2} />
        <Wrench size={15} strokeWidth={2.5} />
      </ImeBar>

      <Editor>
        <EditorTitle>截面编辑</EditorTitle>
        <EditorBody>
          <EditorTabs>
            <ETab>截面</ETab>
            <ETab $on>配筋</ETab>
          </EditorTabs>
          <EBar $h={26}>
            <Grip />
            <ELabel $ml={0}>布角筋</ELabel><ELabel>布边筋</ELabel><ELabel>特殊布筋</ELabel><ELabel>对齐钢筋</ELabel><ELabel>画箍筋</ELabel>
            <Sep $ml={8} $h={16} />
            <ELabel $ml={7}>修改纵筋</ELabel><ELabel>修改箍筋</ELabel><ELabel>编辑弯钩</ELabel><ELabel>端头伸缩</ELabel><ELabel $dim>删除</ELabel>
          </EBar>
          <EBar $h={27} $w={197}>
            <Grip />
            <ELabel $dim $ml={0}>钢筋信息</ELabel>
            <ECombo>C8@150<Caret $ml={0} $c="#666" /></ECombo>
          </EBar>
          <CanvasWrap><Section /></CanvasWrap>
          <EStatus>
            <ECell $w={142}><Lat>(X: -518 Y: 279)</Lat></ECell>
            <ECell />
          </EStatus>
        </EditorBody>
      </Editor>

      <Dialog>
        <DTitle>其它箍筋类型设置<X size={15} strokeWidth={1.5} /></DTitle>
        <DBody>
          <DGrid>
            <Cell $kind="head" />
            <Cell $kind="gold" $center $c="#660066">箍筋图号</Cell>
            <Cell $kind="head" $center>箍筋信息</Cell>
            <Cell $kind="head" $center>图形</Cell>
            {stirrups.map((v, i) => (
              <React.Fragment key={v}>
                <Cell $kind={i === 0 ? 'rowsel' : 'row'} $center $c={i === 0 ? '#660066' : '#111'}><Lat>{i + 1}</Lat></Cell>
                <Cell $kind={i === 0 ? 'pale' : undefined} $center><Lat>195</Lat></Cell>
                <Cell $pl={4}><Sim t="虫8@200" /></Cell>
                <Cell>
                  <ShapeNum>160</ShapeNum>
                  <ShapeBox>
                    <ShapeVal>{v}</ShapeVal>
                    <ShapeHook width="14" height="14" viewBox="0 0 14 14"><path d="M0 6L7 0M6 13L13 4" stroke="#000" strokeWidth="2" fill="none" /></ShapeHook>
                  </ShapeBox>
                </Cell>
              </React.Fragment>
            ))}
          </DGrid>
        </DBody>
        <DFoot>
          <DBtn>新建</DBtn>
          <DBtn $ml={7}>删除</DBtn>
          <DBtn $ml={7}>复制</DBtn>
          <DBtn $primary $ml={52} $mt={1}>确定</DBtn>
          <DBtn $ml={7} $mt={1}>取消</DBtn>
        </DFoot>
      </Dialog>
    </Screen>
  );
}
